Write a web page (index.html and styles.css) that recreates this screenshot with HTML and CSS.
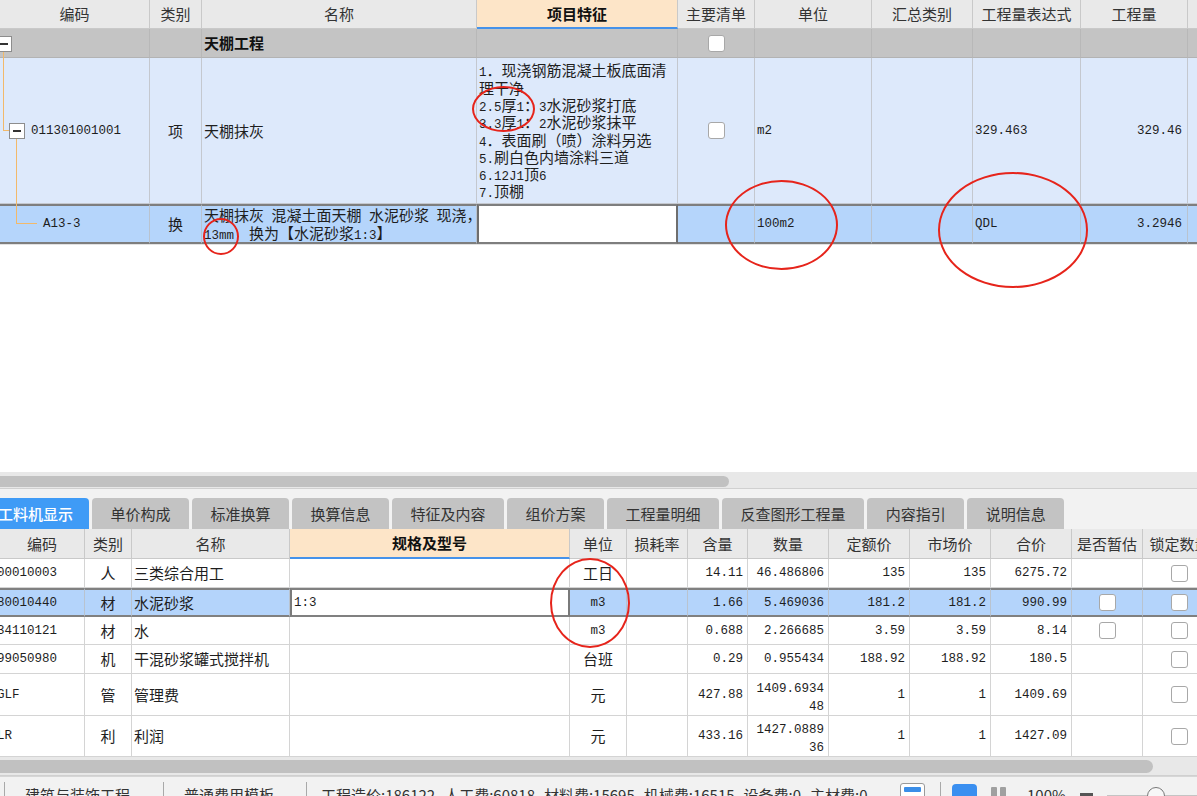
FILE: index.html
```html
<!DOCTYPE html>
<html lang="zh-CN">
<head>
<meta charset="utf-8">
<title>天棚抹灰</title>
<link rel="stylesheet" href="styles.css">
</head>
<body>
<div class="app">
  <div class="top">
    <div class="grid top-grid">
      <div class="row hdr"><div>编码</div><div>类别</div><div>名称</div><div class="hl">项目特征</div><div>主要清单</div><div>单位</div><div>汇总类别</div><div>工程量表达式</div><div>工程量</div><div></div></div>
      <div class="row grp"><div></div><div></div><div class="b">天棚工程</div><div></div><div class="c"><i class="cb"></i></div><div></div><div></div><div></div><div></div><div></div></div>
      <div class="row item"><div class="code1"><span class="m">011301001001</span></div><div class="c">项</div><div>天棚抹灰</div><div class="feat"><div><span class="m">1</span>．现浇钢筋混凝土板底面清<br>理干净<br><span class="m">2.5</span>厚<span class="m">1</span>：<span class="m">3</span>水泥砂浆打底<br><span class="m">3.3</span>厚<span class="m">1</span>：<span class="m">2</span>水泥砂浆抹平<br><span class="m">4</span>．表面刷（喷）涂料另选<br><span class="m">5.</span>刷白色内墙涂料三道<br><span class="m">6.12J1</span>顶<span class="m">6</span><br><span class="m">7.</span>顶棚</div></div><div class="c"><i class="cb"></i></div><div><span class="m">m2</span></div><div></div><div><span class="m">329.463</span></div><div class="r"><span class="m">329.46</span></div><div></div></div>
      <div class="row sel"><div class="code2"><span class="m">A13-3</span></div><div class="c">换</div><div class="nm2"><div>天棚抹灰<span class="m"> </span>混凝土面天棚<span class="m"> </span>水泥砂浆<span class="m"> </span>现浇，<br><span class="m">13mm  </span>换为【水泥砂浆<span class="m">1:3</span>】</div></div><div class="edit"></div><div></div><div><span class="m">100m2</span></div><div></div><div><span class="m">QDL</span></div><div class="r"><span class="m">3.2946</span></div><div></div></div>
    </div>
    <i class="tv tv1"></i><i class="th th1"></i><i class="mbox mb1"></i><i class="mbox mb2"></i><i class="tv tv2"></i><i class="th th2"></i>
  </div>

  <div class="blank"></div>

  <div class="hs hs1"><div class="thumb"></div></div>

  <div class="tabs">
    <div class="tab on">工料机显示</div><div class="tab">单价构成</div><div class="tab">标准换算</div><div class="tab">换算信息</div><div class="tab">特征及内容</div><div class="tab">组价方案</div><div class="tab">工程量明细</div><div class="tab">反查图形工程量</div><div class="tab">内容指引</div><div class="tab">说明信息</div>
  </div>

  <div class="bottom">
    <div class="grid bot-grid">
      <div class="row hdr"><div>编码</div><div>类别</div><div>名称</div><div class="hl">规格及型号</div><div>单位</div><div>损耗率</div><div>含量</div><div>数量</div><div>定额价</div><div>市场价</div><div>合价</div><div>是否暂估</div><div>锁定数量</div></div>
      <div class="row brow"><div class="bcode"><span class="m">00010003</span></div><div class="c">人</div><div>三类综合用工</div><div></div><div class="c">工日</div><div></div><div class="r"><span class="m">14.11</span></div><div class="r"><span class="m">46.486806</span></div><div class="r"><span class="m">135</span></div><div class="r"><span class="m">135</span></div><div class="r"><span class="m">6275.72</span></div><div></div><div class="c"><i class="cb"></i></div></div>
      <div class="row bsel"><div class="bcode"><span class="m">80010440</span></div><div class="c">材</div><div>水泥砂浆</div><div class="edit"><span class="m">1:3</span></div><div class="c"><span class="m">m3</span></div><div></div><div class="r"><span class="m">1.66</span></div><div class="r"><span class="m">5.469036</span></div><div class="r"><span class="m">181.2</span></div><div class="r"><span class="m">181.2</span></div><div class="r"><span class="m">990.99</span></div><div class="c"><i class="cb"></i></div><div class="c"><i class="cb"></i></div></div>
      <div class="row brow"><div class="bcode"><span class="m">34110121</span></div><div class="c">材</div><div>水</div><div></div><div class="c"><span class="m">m3</span></div><div></div><div class="r"><span class="m">0.688</span></div><div class="r"><span class="m">2.266685</span></div><div class="r"><span class="m">3.59</span></div><div class="r"><span class="m">3.59</span></div><div class="r"><span class="m">8.14</span></div><div class="c"><i class="cb"></i></div><div class="c"><i class="cb"></i></div></div>
      <div class="row brow"><div class="bcode"><span class="m">99050980</span></div><div class="c">机</div><div>干混砂浆罐式搅拌机</div><div></div><div class="c">台班</div><div></div><div class="r"><span class="m">0.29</span></div><div class="r"><span class="m">0.955434</span></div><div class="r"><span class="m">188.92</span></div><div class="r"><span class="m">188.92</span></div><div class="r"><span class="m">180.5</span></div><div></div><div class="c"><i class="cb"></i></div></div>
      <div class="row brow"><div class="bcode"><span class="m">GLF</span></div><div class="c">管</div><div>管理费</div><div></div><div class="c">元</div><div></div><div class="r"><span class="m">427.88</span></div><div class="r"><div class="two"><span class="m">1409.6934</span><br><span class="m">48</span></div></div><div class="r"><span class="m">1</span></div><div class="r"><span class="m">1</span></div><div class="r"><span class="m">1409.69</span></div><div></div><div class="c"><i class="cb"></i></div></div>
      <div class="row brow"><div class="bcode"><span class="m">LR</span></div><div class="c">利</div><div>利润</div><div></div><div class="c">元</div><div></div><div class="r"><span class="m">433.16</span></div><div class="r"><div class="two"><span class="m">1427.0889</span><br><span class="m">36</span></div></div><div class="r"><span class="m">1</span></div><div class="r"><span class="m">1</span></div><div class="r"><span class="m">1427.09</span></div><div></div><div class="c"><i class="cb"></i></div></div>
    </div>
  </div>

  <div class="hs hs2"><div class="thumb"></div></div>

  <div class="status">
    <i class="sep sep0"></i><span class="st st1">建筑与装饰工程</span><i class="sep sep1"></i><span class="st st2">普通费用模板</span><i class="sep sep2"></i>
    <div class="sums"><span>工程造价:186122</span><span>人工费:60818</span><span>材料费:15695</span><span>机械费:16515</span><span>设备费:0</span><span>主材费:0</span></div>
    <i class="ico-box"><i class="ico-bar"></i></i><i class="sep sep3"></i><i class="ico-blue"></i><i class="ico-bars"><i></i><i></i></i><span class="st zoomv">100%</span><i class="zminus"></i>
    <div class="slider"><i class="trk trk1"></i><i class="knob"></i><i class="trk trk2"></i></div>
  </div>
</div>

<i class="mk mk1"></i>
<i class="mk mk2"></i>
<i class="mk mk3"></i>
<i class="mk mk4"></i>
<i class="mk mk5"></i>
</body>
</html>
```

FILE: styles.css
```css
* { box-sizing: border-box; margin: 0; padding: 0; }
html, body { width: 1197px; height: 796px; overflow: hidden; background: #fff; }
body { position: relative; font-family: "Noto Sans CJK SC", sans-serif; font-size: 15px; color: #1e1e1e; }
i { font-style: normal; }

.m { font-family: "Liberation Mono", monospace; font-size: 12.5px; white-space: pre; }
.feat .m, .nm2 .m, .two .m { line-height: 10px; }

.app { display: flex; flex-direction: column; width: 1197px; }

/* ---------- generic grid ---------- */
.grid { display: grid; }
.row { display: contents; }
.row > div {
  display: flex;
  align-items: center;
  padding: 0 2px;
  border-right: 1px solid #c9c9c9;
  border-bottom: 1px solid #c9c9c9;
  white-space: nowrap;
  overflow: hidden;
  line-height: 18px;
}
.row > .c { justify-content: center; }
.row > .r { justify-content: flex-end; padding-right: 4px; }

.hdr > div { background: #e9e9e9; justify-content: center; color: #333; }
.hdr > .hl { background: #fde5c8; border-bottom: 2px solid #4592ea; font-weight: 700; color: #111; }

.cb {
  display: inline-block;
  width: 17px;
  height: 17px;
  background: #fff;
  border: 1px solid #a8a8a8;
  border-radius: 3px;
}

/* ---------- top table ---------- */
.top { position: relative; height: 244px; overflow: hidden; flex: none; }
.top-grid {
  grid-template-columns: 150px 52px 275px 201px 77px 117px 101px 108px 107px 30px;
  grid-template-rows: 29px 29px 146px 40px;
  width: 1218px;
}
.grp > div { background: #c4c4c4; border-right-color: #b8b8b8; border-bottom-color: #b3b3b3; }
.grp > .b { font-weight: 700; color: #111; }
.item > div { background: #dde9fb; border-right-color: #c4c8cf; border-bottom-color: #c4c8cf; }
.item > .code1 { padding-left: 31px; }
.item > .feat { line-height: 17.3px; padding-left: 2px; }
.item > .r { padding-right: 5px; }
.sel > div {
  background: #b5d5fb;
  border-top: 2px solid #7e7e7e;
  border-bottom: 2px solid #7e7e7e;
  border-right-color: #b9c3cf;
}
.sel > .code2 { padding-left: 43px; }
.sel > .nm2 { align-items: flex-start; line-height: 18px; }
.sel > .edit { background: #fff; border-left: 2px solid #6e6e6e; border-right: 2px solid #6e6e6e; }
.sel > .r { padding-right: 5px; }

/* tree lines */
.tv, .th, .mbox { position: absolute; display: block; }
.tv { width: 1px; background: #f2b96a; }
.th { height: 1px; background: #f2b96a; }
.tv1 { left: 3px; top: 51px; height: 80px; }
.th1 { left: 3px; top: 130px; width: 7px; }
.tv2 { left: 16px; top: 139px; height: 85px; }
.th2 { left: 16px; top: 223px; width: 21px; }
.mbox { width: 16px; height: 16px; border: 1px solid #8d8d8d; background: #fff; }
.mbox::after { content: ""; position: absolute; left: 3px; top: 6px; width: 8px; height: 2px; background: #333; }
.mb1 { left: -4px; top: 36px; }
.mb2 { left: 9px; top: 123px; }

.blank { height: 228px; flex: none; background: #fff; border-top: 1px solid #e2e2e2; }

/* ---------- scrollbars ---------- */
.hs { flex: none; background: #e8e8e8; border-bottom: 1px solid #d0d0d0; }
.hs1 { height: 17px; padding-top: 4px; }
.hs1 .thumb { width: 729px; height: 11px; }
.hs2 { height: 19px; padding-top: 3px; }
.hs2 .thumb { width: 1153px; height: 13px; }
.thumb { background: #c1c1c1; border-radius: 0 7px 7px 0; }

/* ---------- tabs ---------- */
.tabs {
  height: 40px;
  flex: none;
  background: #f2f2f2;
  display: flex;
  align-items: flex-end;
  gap: 3px;
  overflow: hidden;
}
.tab {
  flex: none;
  height: 31px;
  line-height: 31px;
  padding: 0 18.5px;
  background: #c3c3c3;
  border-radius: 4px 4px 0 0;
  color: #333;
}
.tab.on { background: #3f9bf6; color: #fff; margin-left: -18px; padding: 0 16px; font-weight: 500; }

/* ---------- bottom table ---------- */
.bottom { height: 228px; overflow: hidden; flex: none; }
.bot-grid {
  grid-template-columns: 85px 47px 158px 280px 57px 61px 60px 81px 81px 81px 81px 71px 74px;
  grid-template-rows: 30px 29px 29px 28px 29px 42px 41px;
  width: 1217px;
}
.brow > div { background: #fff; border-right-color: #d4d4d4; border-bottom-color: #d4d4d4; }
.row > .bcode { padding-left: 0; }
.bcode .m { margin-left: -3px; }
.bsel > div {
  background: #b4d4fb;
  border-top: 2px solid #808080;
  border-bottom: 2px solid #808080;
  border-right-color: #b9c3cf;
}
.bsel > .edit { background: #fff; border-left: 2px solid #7a7a7a; border-right: 2px solid #7a7a7a; }
.two { text-align: right; line-height: 18px; }

/* ---------- status bar ---------- */
.status {
  height: 30px;
  flex: none;
  display: flex;
  align-items: flex-start;
  background: #f2f2f2;
  border-top: 1px solid #d6d6d6;
  color: #333;
}
.st { line-height: 20px; margin-top: 8px; flex: none; }
.sep { display: block; width: 1px; height: 20px; background: #a9a9a9; margin-top: 5px; flex: none; }
.sep0 { margin-left: 4px; }
.st1 { margin-left: 20px; }
.sep1 { margin-left: 33px; }
.st2 { margin-left: 20px; }
.sep2 { margin-left: 32px; }
.sums { margin-left: 14px; width: 579px; flex: none; display: flex; gap: 9px; line-height: 20px; margin-top: 8px; white-space: nowrap; }
.ico-box {
  display: block; flex: none;
  width: 25px; height: 18px; margin-top: 6px;
  background: #fff; border: 1px solid #9a9a9a; border-radius: 3px;
  padding: 3px 3px 0;
}
.ico-bar { display: block; height: 5px; background: #3b8ee8; border-radius: 1px; }
.sep3 { margin-left: 15px; }
.ico-blue { display: block; flex: none; width: 25px; height: 22px; margin: 7px 0 0 11px; background: #3a8ff0; border-radius: 4px; }
.ico-bars { display: flex; gap: 3px; flex: none; margin: 10px 0 0 14px; }
.ico-bars i { display: block; width: 6px; height: 14px; background: #a0a0a0; border-radius: 1px; }
.zoomv { margin-left: 21px; }
.zminus { display: block; flex: none; width: 13px; height: 5px; margin: 16px 0 0 14px; background: #555; }
.slider { display: flex; align-items: center; flex: none; margin: 9px 0 0 14px; height: 20px; }
.trk { display: block; height: 3px; background: #c4c4c4; }
.trk1 { width: 40px; }
.trk2 { width: 60px; }
.knob { display: block; width: 18px; height: 18px; border-radius: 50%; border: 1.5px solid #777; background: #f7f7f7; }

/* ---------- red annotation ellipses ---------- */
.mk { position: absolute; display: block; border: 2.5px solid #e6241b; border-radius: 50%; }
.mk1 { left: 472px; top: 86px; width: 63px; height: 46px; }
.mk2 { left: 203px; top: 218px; width: 36px; height: 37px; }
.mk3 { left: 725px; top: 180px; width: 113px; height: 90px; }
.mk4 { left: 938px; top: 172px; width: 150px; height: 116px; }
.mk5 { left: 550px; top: 558px; width: 80px; height: 90px; }
```
